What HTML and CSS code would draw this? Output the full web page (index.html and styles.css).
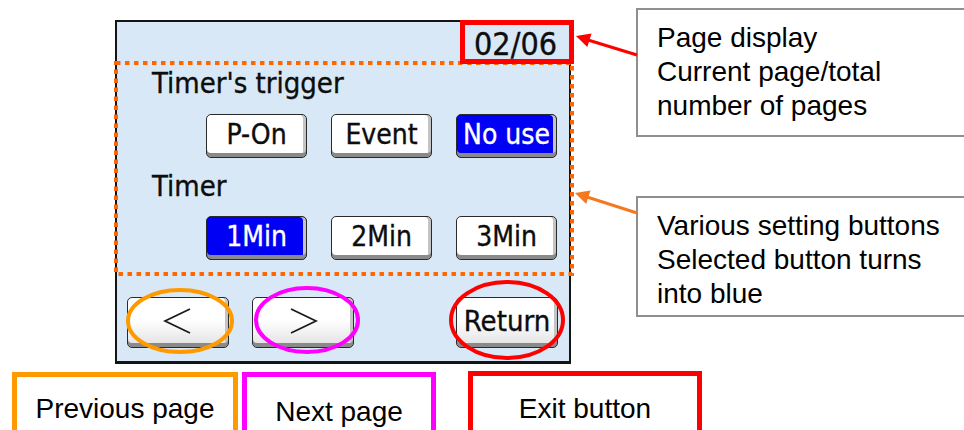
FILE: index.html
```html
<!DOCTYPE html>
<html lang="en">

<head>
    <meta charset="UTF-8">
    <meta name="viewport" content="width=device-width, initial-scale=1.0">
    <title>timer setting screen</title>
    <link rel="stylesheet" href="styles.css">
</head>

<body>
    <div class="stage">
        <div class="screen">
            <div class="page-no">02/06</div>
            <div class="label">Timer's trigger</div>
            <div class="choice-row">
                <div class="btn">P-On</div>
                <div class="btn">Event</div>
                <div class="btn selected">No use</div>
            </div>
            <div class="label label-timer">Timer</div>
            <div class="choice-row choice-row-timer">
                <div class="btn selected">1Min</div>
                <div class="btn">2Min</div>
                <div class="btn">3Min</div>
            </div>
            <div class="nav-row">
                <div class="btn nav">
                    <svg width="30" height="28" viewBox="0 0 30 28">
                        <polyline points="27,2 2,14 27,26" fill="none" stroke="#1a1a1a" stroke-width="1.8" />
                    </svg>
                </div>
                <div class="btn nav">
                    <svg width="30" height="28" viewBox="0 0 30 28">
                        <polyline points="3,2 28,14 3,26" fill="none" stroke="#1a1a1a" stroke-width="1.8" />
                    </svg>
                </div>
                <div class="btn nav nav-return">Return</div>
            </div>
        </div>

        <div class="callout callout-page">
            Page display<br>
            Current page/total<br>
            number of pages
        </div>
        <div class="callout callout-buttons">
            Various setting buttons<br>
            Selected button turns<br>
            into blue
        </div>

        <div class="tag tag-prev">Previous page</div>
        <div class="tag tag-next">Next page</div>
        <div class="tag tag-exit">Exit button</div>

        <!-- annotation marks drawn over the screen -->
        <svg class="marks" width="964" height="430" viewBox="0 0 964 430">
            <rect x="116" y="63" width="456" height="211" fill="none" stroke="#ff6600" stroke-width="4"
                stroke-dasharray="4.5 4.5" />
            <rect x="462.5" y="22.5" width="109" height="39" fill="none" stroke="#ff0000" stroke-width="5" />
            <ellipse cx="180" cy="321" rx="52" ry="31" fill="none" stroke="#ff9900" stroke-width="4" />
            <ellipse cx="307" cy="320" rx="51" ry="32" fill="none" stroke="#ff00ff" stroke-width="4" />
            <ellipse cx="507" cy="320" rx="56" ry="38" fill="none" stroke="#ff0000" stroke-width="4" />
            <line x1="637" y1="55" x2="588" y2="40" stroke="#ff0000" stroke-width="3" />
            <polygon points="576,36 591.5,33.5 587.3,46.9" fill="#ff0000" />
            <line x1="637" y1="213" x2="587" y2="197" stroke="#f47920" stroke-width="3" />
            <polygon points="575,193 590.5,190.6 586.2,204" fill="#f47920" />
        </svg>
    </div>
</body>

</html>
```

FILE: styles.css
```css
html,
body {
    margin: 0;
    padding: 0;
    background: #ffffff;
    overflow: hidden;
}

.stage {
    position: relative;
    width: 964px;
    height: 430px;
    font-family: "Liberation Sans", Arial, sans-serif;
    color: #111111;
}

/* the device screen */
.screen {
    position: absolute;
    left: 115px;
    top: 20px;
    width: 456px;
    height: 344px;
    box-sizing: border-box;
    border: 2px solid #141414;
    border-bottom-width: 3px;
    background: #d8e8f6;
    padding: 4px 12px 0 10px;
    font-family: "DejaVu Sans Condensed", "DejaVu Sans", sans-serif;
    color: #0d0d0d;
    -webkit-text-stroke: 0.35px currentColor;
}

.page-no {
    text-align: right;
    font-size: 32px;
    line-height: 36px;
    height: 36px;
}

.label {
    margin: 4px 0 0 25px;
    font-size: 29px;
    line-height: 34px;
    height: 34px;
}

.label-timer {
    margin-top: 11px;
}

.choice-row {
    display: flex;
    justify-content: flex-end;
    gap: 24px;
    margin-top: 14px;
}

.choice-row-timer {
    margin-top: 13px;
}

.btn {
    display: flex;
    align-items: center;
    justify-content: center;
    width: 101px;
    height: 44px;
    box-sizing: border-box;
    border: 1px solid #2a2a2a;
    border-radius: 5px;
    background: #ffffff;
    box-shadow: inset 0 -4px 0 #8a8a8a, inset -3px 0 0 #c4c4c4;
    font-size: 28px;
    padding-bottom: 3px;
}

.btn.selected {
    background: #0000f5;
    color: #ffffff;
}

.nav-row {
    display: flex;
    gap: 23px;
    margin-top: 37px;
}

.btn.nav {
    width: 102px;
    height: 51px;
    background: linear-gradient(#ffffff 45%, #e6e6e6 90%);
    padding-bottom: 4px;
}

.nav-return {
    margin-left: auto;
    margin-right: -1px;
    font-size: 29px;
}

/* callout boxes on the right */
.callout {
    position: absolute;
    left: 636px;
    width: 340px;
    box-sizing: border-box;
    border: 2px solid #8f8f8f;
    background: #ffffff;
    padding: 11px 0 0 19px;
    font-size: 28px;
    line-height: 34px;
    color: #000000;
}

.callout-page {
    top: 8px;
    height: 129px;
}

.callout-buttons {
    top: 196px;
    height: 121px;
}

/* labels under the screen */
.tag {
    position: absolute;
    top: 372px;
    height: 70px;
    box-sizing: border-box;
    border: 5px solid;
    text-align: center;
    font-size: 28px;
    line-height: 32px;
    padding-top: 16px;
    color: #000000;
}

.tag-prev {
    left: 12px;
    width: 226px;
    border-color: #ff9900;
}

.tag-next {
    left: 242px;
    width: 194px;
    border-color: #ff00ff;
    padding-top: 19px;
}

.tag-exit {
    left: 468px;
    top: 371px;
    width: 234px;
    border-color: #ff0000;
    padding-top: 17px;
}

.marks {
    position: absolute;
    left: 0;
    top: 0;
    pointer-events: none;
}
```
